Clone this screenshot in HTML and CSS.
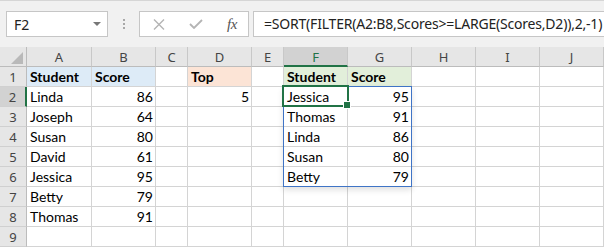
FILE: index.html
```html
<!DOCTYPE html>
<html>
<head>
<meta charset="utf-8">
<link rel="stylesheet" href="styles.css">
</head>
<body>
<div class="app">
  <div class="toolbar">
    <div class="namebox"><span class="name">F2</span><span class="caret"></span></div>
    <div class="grip"><i></i><i></i><i></i></div>
    <div class="fbuttons">
      <svg class="ico" width="12" height="11" viewBox="0 0 12 11"><path d="M1 0.5 L11 10.5 M11 0.5 L1 10.5" stroke="#b4b4b4" stroke-width="1.4" fill="none"/></svg>
      <svg class="ico" width="14" height="10" viewBox="0 0 14 10"><path d="M1 5 L5 9 L13 1" stroke="#b4b4b4" stroke-width="1.8" fill="none"/></svg>
      <span class="fx">fx</span>
    </div>
    <div class="formula">=SORT(FILTER(A2:B8,Scores&gt;=LARGE(Scores,D2)),2,-1)</div>
  </div>
  <div class="sheet">
    <div class="corner"><span class="tri"></span></div>
    <div class="ch">A</div><div class="ch">B</div><div class="ch">C</div><div class="ch">D</div><div class="ch">E</div><div class="ch sel">F</div><div class="ch">G</div><div class="ch">H</div><div class="ch">I</div><div class="ch">J</div>

    <div class="rh">1</div>
    <div class="c b blue">Student</div><div class="c b blue">Score</div><div class="c"></div><div class="c b orange">Top</div><div class="c"></div><div class="c b green">Student</div><div class="c b green">Score</div><div class="c"></div><div class="c"></div><div class="c"></div>

    <div class="rh sel">2</div>
    <div class="c">Linda</div><div class="c n">86</div><div class="c"></div><div class="c n">5</div><div class="c"></div><div class="c">Jessica</div><div class="c n">95</div><div class="c"></div><div class="c"></div><div class="c"></div>

    <div class="rh">3</div>
    <div class="c">Joseph</div><div class="c n">64</div><div class="c"></div><div class="c"></div><div class="c"></div><div class="c">Thomas</div><div class="c n">91</div><div class="c"></div><div class="c"></div><div class="c"></div>

    <div class="rh">4</div>
    <div class="c">Susan</div><div class="c n">80</div><div class="c"></div><div class="c"></div><div class="c"></div><div class="c">Linda</div><div class="c n">86</div><div class="c"></div><div class="c"></div><div class="c"></div>

    <div class="rh">5</div>
    <div class="c">David</div><div class="c n">61</div><div class="c"></div><div class="c"></div><div class="c"></div><div class="c">Susan</div><div class="c n">80</div><div class="c"></div><div class="c"></div><div class="c"></div>

    <div class="rh">6</div>
    <div class="c">Jessica</div><div class="c n">95</div><div class="c"></div><div class="c"></div><div class="c"></div><div class="c">Betty</div><div class="c n">79</div><div class="c"></div><div class="c"></div><div class="c"></div>

    <div class="rh">7</div>
    <div class="c">Betty</div><div class="c n">79</div><div class="c"></div><div class="c"></div><div class="c"></div><div class="c"></div><div class="c"></div><div class="c"></div><div class="c"></div><div class="c"></div>

    <div class="rh">8</div>
    <div class="c">Thomas</div><div class="c n">91</div><div class="c"></div><div class="c"></div><div class="c"></div><div class="c"></div><div class="c"></div><div class="c"></div><div class="c"></div><div class="c"></div>

    <div class="rh">9</div>
    <div class="c"></div><div class="c"></div><div class="c"></div><div class="c"></div><div class="c"></div><div class="c"></div><div class="c"></div><div class="c"></div><div class="c"></div><div class="c"></div>

    <div class="spill"></div>
    <div class="active"><span class="handle"></span></div>
  </div>
</div>
</body>
</html>
```
FILE: styles.css
```css
* { box-sizing: border-box; }
html, body { margin: 0; padding: 0; background: #fff; }
body { width: 604px; height: 247px; overflow: hidden; font-family: "Noto Sans", sans-serif; }
.app { width: 604px; }

.toolbar {
  height: 47px;
  background: #f1f1f1;
  border-top: 1px solid #d6d6d6;
  display: flex;
  align-items: flex-start;
  padding: 10px 0 0 6px;
}
.namebox {
  width: 102px; height: 26px;
  background: #fff;
  border: 1px solid #c6c6c6;
  display: flex; align-items: center; justify-content: space-between;
  padding: 0 6px 0 7px;
}
.name { font-size: 14px; color: #222; }
.caret {
  width: 0; height: 0;
  border-left: 4px solid transparent;
  border-right: 4px solid transparent;
  border-top: 4px solid #777;
}
.grip {
  width: 31px; height: 26px;
  display: flex; flex-direction: column; align-items: center; justify-content: center; gap: 2px;
}
.grip i { display: block; width: 2px; height: 2px; background: #a8a8a8; }
.fbuttons {
  width: 110px; height: 26px;
  background: #fff;
  border: 1px solid #c6c6c6;
  display: flex; align-items: center;
  padding-left: 13px;
}
.fbuttons .ico { display: block; }
.fbuttons .ico + .ico { margin-left: 24px; }
.fx {
  margin-left: 24px;
  font-family: "Liberation Serif", serif;
  font-style: italic;
  font-size: 15px;
  color: #555;
  letter-spacing: -0.5px;
}
.formula {
  flex: 1;
  height: 26px;
  margin-left: 4px;
  background: #fff;
  border: 1px solid #c6c6c6;
  border-right: none;
  font-size: 14px;
  color: #222;
  padding: 2px 0 0 10px;
  white-space: nowrap;
  letter-spacing: -0.2px;
}

.sheet {
  position: relative;
  display: grid;
  grid-template-columns: 27px 65px 64px 32px 64px 32px 64px 64px 64px 64px 64px;
  grid-template-rows: repeat(10, 20px);
  font-family: "Lato", sans-serif;
  font-size: 14px;
}
.corner, .ch, .rh {
  background: #e6e6e6;
  color: #444;
  font-family: "Noto Sans", sans-serif;
  font-size: 13px;
  display: flex; align-items: center; justify-content: center;
}
.corner { border-right: 1px solid #bcbcbc; border-bottom: 1px solid #bcbcbc; position: relative; }
.tri {
  position: absolute; left: 11px; top: 5px;
  width: 12px; height: 12px;
  background: #b9b9b9;
  clip-path: polygon(100% 0, 100% 100%, 0 100%);
}
.ch { border-right: 1px solid #c8c8c8; border-bottom: 1px solid #bcbcbc; padding-top: 1px; }
.ch.sel { background: #d2d2d2; color: #217346; border-bottom: 2px solid #217346; }
.rh { border-right: 1px solid #bcbcbc; border-bottom: 1px solid #d0d0d0; padding-top: 1px; }
.rh.sel { background: #d2d2d2; border-right: 2px solid #217346; }

.c {
  border-right: 1px solid #d4d4d4;
  border-bottom: 1px solid #d4d4d4;
  color: #000;
  display: flex; align-items: flex-end;
  padding: 0 3px 1px 3px;
  white-space: nowrap;
}
.c.n { justify-content: flex-end; padding-right: 2px; }
.c.b { font-weight: bold; }
.c.blue { background: #ddebf7; }
.c.orange { background: #fce4d6; }
.c.green { background: #e2efda; }

.spill {
  position: absolute;
  left: 283px; top: 39px;
  width: 129px; height: 101px;
  border: 1px solid #3f74c6;
  box-shadow: 0 3px 6px rgba(0,0,0,0.12);
  pointer-events: none;
}
.active {
  position: absolute;
  left: 282px; top: 38px;
  width: 67px; height: 22px;
  border: 2px solid #217346;
}
.handle {
  position: absolute;
  right: -4px; bottom: -4px;
  width: 6px; height: 6px;
  background: #217346;
  border: 1px solid #fff;
  box-sizing: content-box;
}
```
